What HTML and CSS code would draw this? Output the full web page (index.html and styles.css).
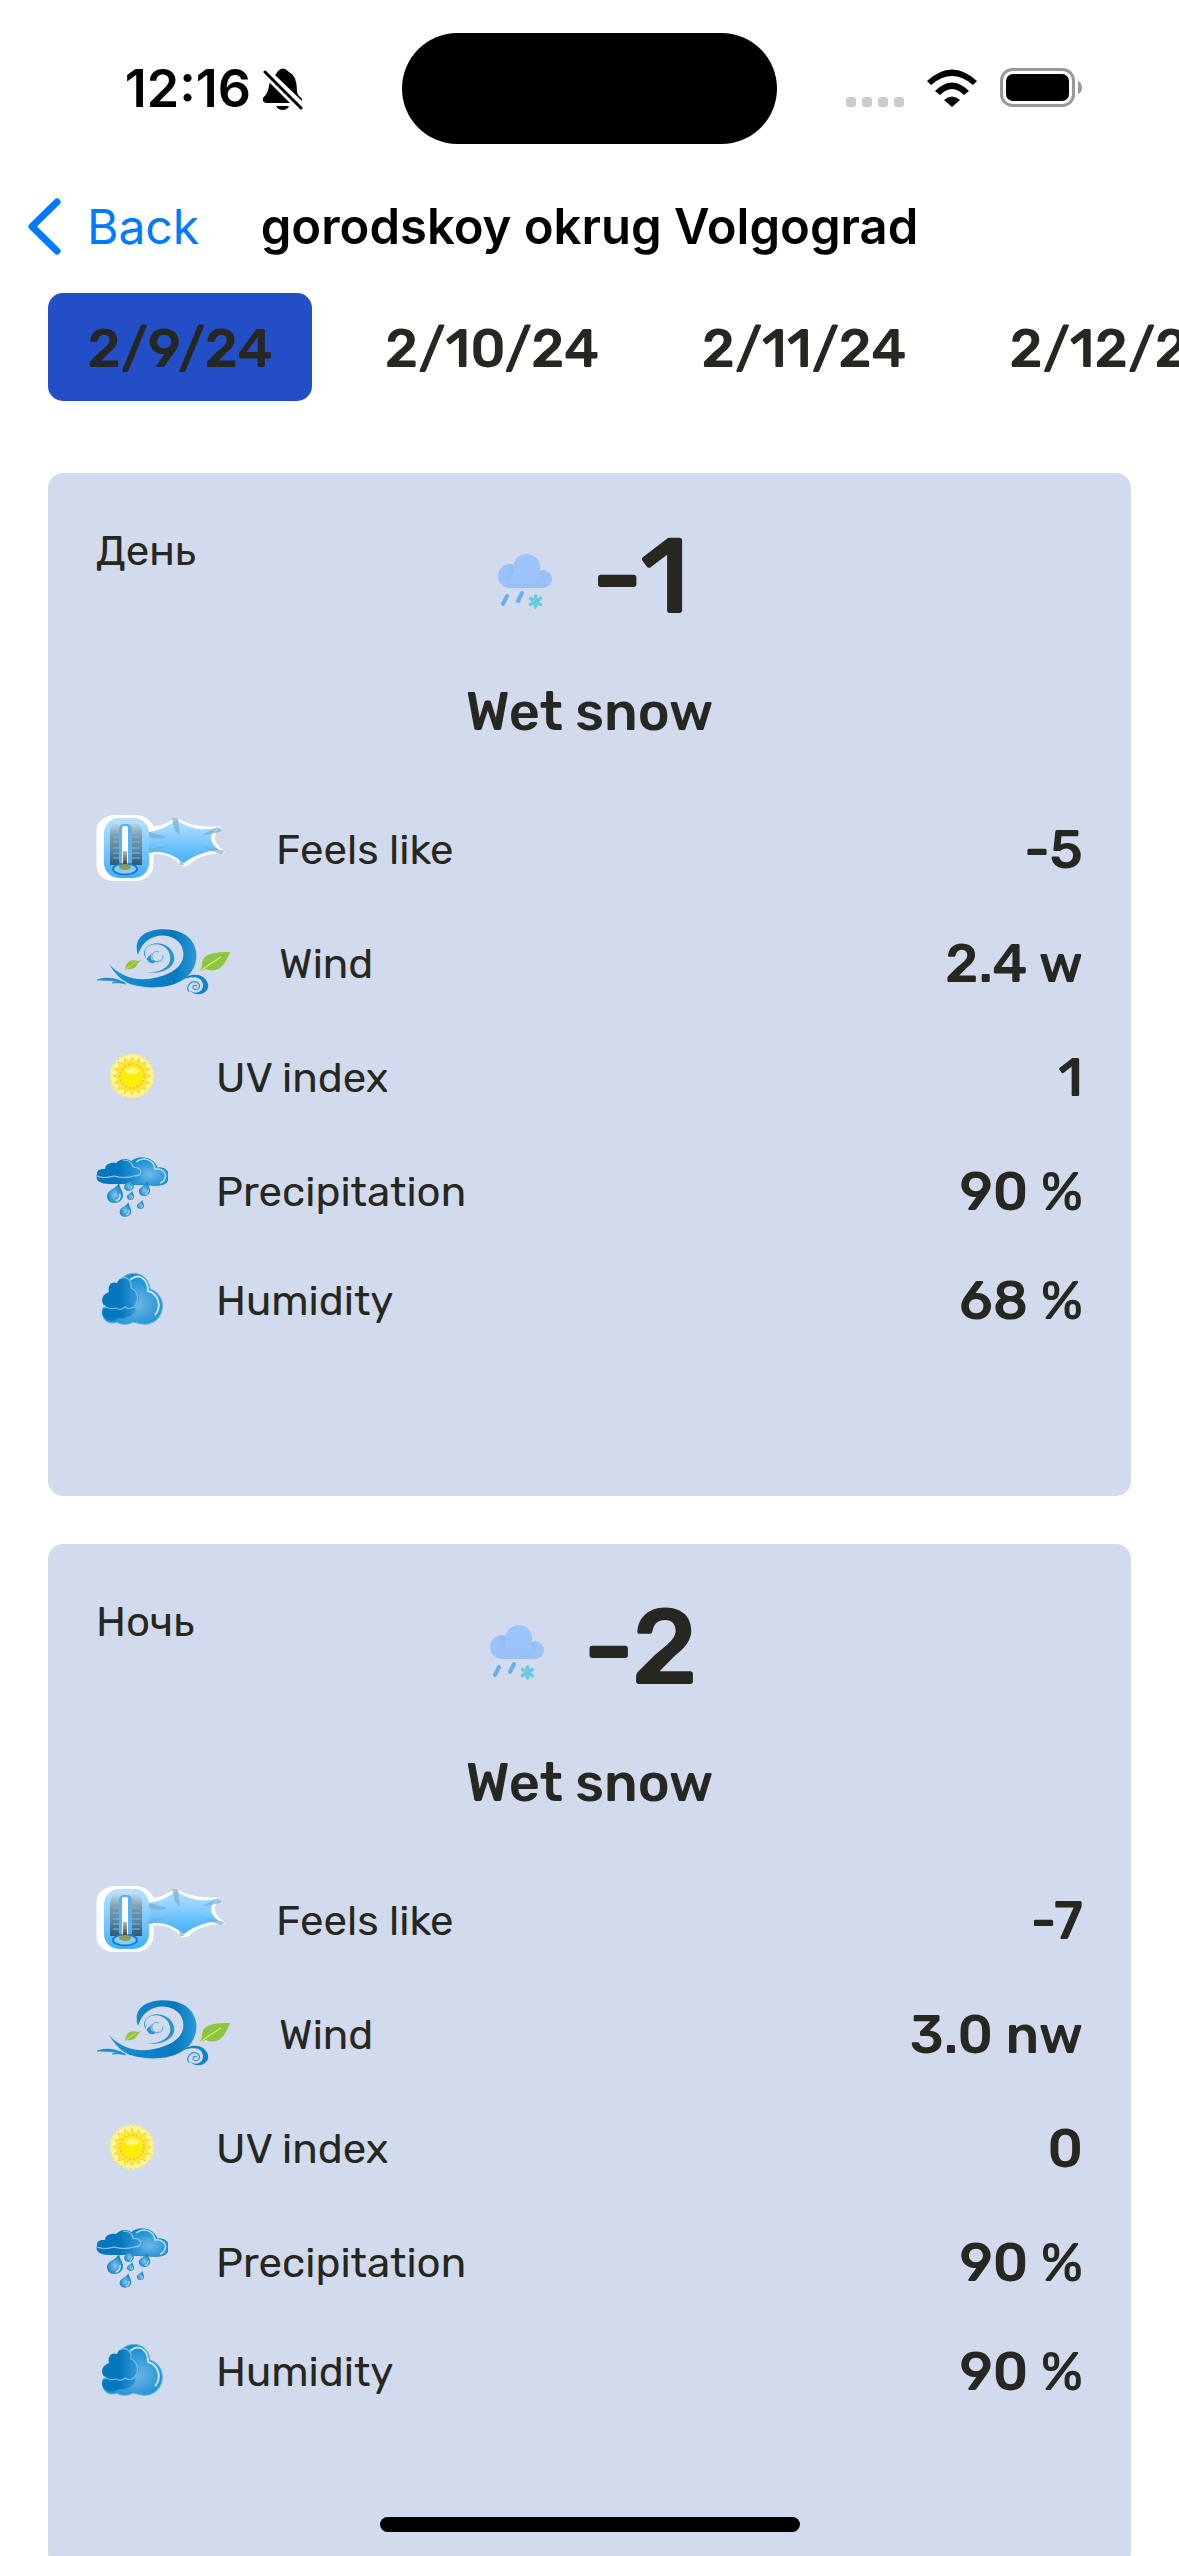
FILE: index.html
```html
<!DOCTYPE html>
<html lang="en">
<head>
<meta charset="utf-8">
<meta name="viewport" content="width=device-width, initial-scale=1">
<title>gorodskoy okrug Volgograd</title>
<link rel="stylesheet" href="styles.css">
</head>
<body>
<svg class="defs" aria-hidden="true">
  <defs>
    <linearGradient id="sky" x1="0" y1="0" x2="0" y2="1"><stop offset="0" stop-color="#b9e2ff"/><stop offset="1" stop-color="#3fb0ff"/></linearGradient>
    <linearGradient id="plate" x1="0" y1="0" x2="0" y2="1"><stop offset="0" stop-color="#c4e4fb"/><stop offset="0.35" stop-color="#7f97a6"/><stop offset="0.65" stop-color="#5d89a6"/><stop offset="1" stop-color="#2f5770"/></linearGradient>
    <linearGradient id="mercury" x1="0" y1="0" x2="0" y2="1"><stop offset="0" stop-color="#b5bcc4"/><stop offset="1" stop-color="#3b3f3a"/></linearGradient>
    <linearGradient id="wave" x1="0" y1="0" x2="1" y2="0"><stop offset="0" stop-color="#1a93d4"/><stop offset="0.75" stop-color="#0878be"/><stop offset="1" stop-color="#2a9ada"/></linearGradient>
    <radialGradient id="cloudLight" cx="0.55" cy="0.6" r="0.6"><stop offset="0" stop-color="#73b8e6"/><stop offset="0.6" stop-color="#349bd8"/><stop offset="1" stop-color="#128bcd"/></radialGradient>
    <linearGradient id="cloudDark" x1="0" y1="0" x2="1" y2="0"><stop offset="0" stop-color="#0577be"/><stop offset="0.5" stop-color="#0577be"/><stop offset="1" stop-color="#3c9fd9"/></linearGradient>
    <radialGradient id="dropFill" cx="0.5" cy="0.6" r="0.6"><stop offset="0" stop-color="#8ac6ec"/><stop offset="0.6" stop-color="#2d95d3"/><stop offset="1" stop-color="#0676bb"/></radialGradient>
    <linearGradient id="puff" x1="0" y1="0" x2="0" y2="1"><stop offset="0" stop-color="#9cc6ff"/><stop offset="1" stop-color="#9bc0f5"/></linearGradient>
    <linearGradient id="puffShade" x1="0" y1="0" x2="1" y2="0"><stop offset="0.3" stop-color="#9bc3fb"/><stop offset="1" stop-color="#8bb3ec"/></linearGradient>
    <linearGradient id="puffShadeLeft" x1="1" y1="0" x2="0" y2="0"><stop offset="0.3" stop-color="#9bc3fb"/><stop offset="1" stop-color="#8bb3ec"/></linearGradient>
  </defs>
  <symbol id="i-sleet" viewBox="-9 -15 72 72">
    <circle cx="12" cy="21" r="12" fill="url(#puffShade)"/>
    <circle cx="45" cy="24" r="9" fill="url(#puffShadeLeft)"/>
    <path d="M12 33C7 31 14 21 16 17A13.500 13.500 0 1 1 41 18C42 24 47 26 50 31L45 33Z" fill="url(#puff)"/>
    <path d="M9 41L5 49M24 38L20 46" stroke="#66b1ec" stroke-width="4" stroke-linecap="round"/>
    <path d="M37.500 41V52M32.500 43.500L42.500 49.500M42.500 43.500L32.500 49.500" stroke="#66cae2" stroke-width="3.500" stroke-linecap="round"/>
  </symbol>
  <symbol id="i-feels" viewBox="0 0 132 66">
    <path d="M24 0H34C48 0 55 5 57 12C66 12 73 7 80 3L84 5C96 12 108 12 124 12C116 20 116 27 129 37C114 38 101 41 92 50L86 51C78 42 70 38 57 39V50C57 60 48 66 36 66H22C8 66 1 60 1 50V15C1 6 10 0 24 0Z" fill="#fff" stroke="#fff" stroke-width="1"/>
    <rect x="8" y="3" width="45" height="60" rx="15" fill="url(#sky)"/>
    <path d="M53 17C66 15 73 10 80 5C94 14 106 16 120 13C113 20 113 28 123 35C110 36 98 40 88 48C76 39 66 35 53 38Z" fill="url(#sky)"/>
    <path d="M76 3H82L84 20L79 16ZM106 20L122 12L126 16Q115 20 106 20ZM105 31L129 36L125 39Q112 35 105 31ZM82 34L88 50H84ZM53 17L71 22Q66 25 53 22ZM53 38L71 32Q64 31 53 34Z" fill="#78a9cb" opacity="0.65"/>
    <path d="M14 50V18Q14 6 26 6H34Q46 6 46 18V50Z" fill="url(#plate)"/>
    <path d="M17 17H44M17 22H44M17 27H44M17 33H44M17 38H44M17 43H44" stroke="#77baf0" stroke-width="1"/>
    <rect x="23" y="9" width="13" height="42" rx="5" fill="#5ab2ee"/>
    <ellipse cx="29" cy="54" rx="12" ry="5.500" fill="#8acbff" stroke="#1b7fc7" stroke-width="2"/>
    <rect x="26" y="11" width="6" height="38" rx="2" fill="#fff"/>
    <rect x="27" y="36" width="4" height="14" fill="url(#mercury)"/>
    <ellipse cx="29" cy="52" rx="6" ry="3" fill="#8e9a55"/>
  </symbol>
  <symbol id="i-wind" viewBox="0 0 135 66">
    <path d="M42 26C35 5 57-2 76 1C97 4 105 22 98 38C89 59 58 62 34 55C24 51 18 43 13 35C24 47 40 53 58 49C83 44 91 31 86 18C79 2 49 1 42 26Z" fill="url(#wave)"/>
    <path d="M58 33Q68 32 66 26Q63 18 55 21Q46 26 52 32C55 36 60 34 61 31C50 33 44 25 51 18C60 10 76 16 78 27C80 38 68 45 50 44C61 44 72 40 74 32C76 20 65 13 55 16C45 20 49 31 55 33Z" fill="#168bce" opacity="0.9"/>
    <path d="M50 30A10 11 0 0 1 66 20Q72 32 60 32Q52 31 56 24" fill="#d2daed"/>
    <path d="M67 26Q67 33 61 33Q55 31 56 26Q58 21 63 23" fill="none" stroke="#59aede"/>
    <path d="M1 51C11 47 22 50 29 54Q17 51 1 51ZM16 54Q23 51 30 55Q22 53 16 54Z" fill="#1f8bcb" stroke="#1f8bcb" stroke-width="0.600"/>
    <path d="M87 50C96 43 109 45 112 55C114 65 99 69 94 61C97 65 106 65 107 57C107 47 97 47 87 50Z" fill="#0f83c8"/>
    <path d="M93 63C89 57 96 50 102 54C107 59 99 63 97 59Q97 55 101 57" fill="none" stroke="#2e98d3" stroke-width="1.200"/>
    <path d="M29 41C30 31 36 30 42 32L45 31Q43 34 42 34C40 39 36 41 31 40Z" fill="#91c63c"/>
    <path d="M30 40L40 33" stroke="#c4e46d"/>
    <path d="M103 43L106 37C105 24 119 23 134 23C130 33 124 46 110 40Z" fill="#8dc63f"/>
    <path d="M103 43Q112 36 125 28" fill="none" stroke="#d2ed80" stroke-width="1.200"/>
  </symbol>
  <symbol id="i-sun" viewBox="0 0 72 66">
    <g transform="translate(36 33)">
      <circle r="21" fill="#fff9a8"/>
      <circle r="21" fill="none" stroke="#fff36b" stroke-width="3" stroke-dasharray="3 2"/>
      <path d="M0-19L3-13L7-18L8-12L14-14L12-8L18-7L13-3L19 0L13 3L18 7L12 8L14 14L8 12L7 18L3 13L0 19L-3 13L-7 18L-8 12L-14 14L-12 8L-18 7L-13 3L-19 0L-13-3L-18-7L-12-8L-14-14L-8-12L-7-18L-3-13Z" fill="#ffea3c" stroke="#ffd42e" stroke-width="1"/>
      <circle r="12" fill="none" stroke="#ffc400" stroke-width="2" stroke-dasharray="2 2"/>
      <circle r="10" fill="#ffee00"/>
      <ellipse cy="-5" rx="7" ry="3.500" fill="#fff67a"/>
    </g>
  </symbol>
  <symbol id="i-drop" viewBox="0 0 18 20">
    <path d="M13 0C14 6 17 8 17 12C17 17 13 20 8 20C3 20 1 16 1 13C1 7 10 6 13 0Z" fill="url(#dropFill)"/>
    <path d="M14 11Q15 16 10 18" fill="none" stroke="#cbe8fa" stroke-width="1.500"/>
  </symbol>
  <symbol id="i-rain" viewBox="0 1 72 66">
    <path d="M34 7C40-1 58 0 61 12C69 11 74 16 72 21C73 29 64 30 53 29L30 28Z" fill="url(#cloudLight)" stroke="#168bce"/>
    <path d="M40 6C48 0 58 4 59 13C66 12 71 17 69 22Q68 26 64 27" fill="none" stroke="#b7dcf4" stroke-width="1.500"/>
    <path d="M1 18C1 13 5 13 9 13C9 8 15 6 20 7C26 1 35 2 38 9C46 9 50 17 44 21C49 25 44 28 37 28H13C3 28-1 24 1 18Z" fill="url(#cloudDark)"/>
    <path d="M1 20Q8 23 18 20Q28 23 38 20C45 20 47 15 42 12L37 11Q36 4 27 4" fill="none" stroke="#8bc8ec" stroke-width="1.200"/>
    <use href="#i-drop" x="10" y="27" width="18" height="20"/>
    <use href="#i-drop" x="27" y="23" width="12" height="12"/>
    <use href="#i-drop" x="42" y="26" width="13" height="14"/>
    <use href="#i-drop" x="30" y="35" width="9" height="9"/>
    <use href="#i-drop" x="40" y="44" width="9" height="9"/>
    <use href="#i-drop" x="23" y="46" width="13" height="15"/>
  </symbol>
  <symbol id="i-humid" viewBox="0 0 72 60">
    <path d="M24 11C28-1 52-2 54 18C69 23 70 42 59 50C50 56 42 52 37 51C30 55 23 53 21 51C11 55 4 46 7 37L24 31Z" fill="url(#cloudLight)" stroke="#5db0df"/>
    <path d="M34 9C43 1 52 8 52 20C63 23 66 36 59 44" fill="none" stroke="#c0e1f6" stroke-width="2"/>
    <path d="M12 37C4 34 4 24 13 21C11 13 17 10 21 12C24 3 36 4 36 16C44 19 45 32 39 36C42 42 30 49 23 47C16 52 3 48 7 38Z" fill="url(#cloudDark)"/>
    <path d="M24 8C31 4 36 10 35 17C43 20 43 31 38 36Q33 39 29 36Q25 40 20 37Q12 39 8 34" fill="none" stroke="#7abfe8" stroke-width="1.200"/>
  </symbol>
</svg>

<div class="screen">
  <header class="status">
    <div class="status-left">
      <span class="time">12:16</span>
      <svg class="bell" viewBox="0 0 40 42" role="img" aria-label="Silent mode">
        <path d="M12 7Q14 6 14 4Q20-3 26 4Q34 8 34 23C34 29 40 29 39 33ZM7 15L27 35H3Q-1 34 0 30Q6 24 6 17Z"/>
        <path d="M13 38H26Q24 42 20 42Q15 42 13 38Z"/>
        <path d="M2 4L38 40" stroke="#000" stroke-width="3" stroke-linecap="round"/>
      </svg>
    </div>
    <div class="island"></div>
    <div class="status-right">
      <svg class="signal" viewBox="0 0 58 10" role="img" aria-label="No signal"><rect width="10" height="10" rx="3"/><rect x="16" width="10" height="10" rx="3"/><rect x="32" width="10" height="10" rx="3"/><rect x="48" width="10" height="10" rx="3"/></svg>
      <svg class="wifi" viewBox="0 0 52 38" role="img" aria-label="Wi-Fi"><path d="M1 12Q26-11 51 12L47 16Q26-2 5 16ZM9 22Q26 5 43 22L38 26Q26 14 14 26ZM18 31Q26 24 34 31L26 38Z"/></svg>
      <svg class="battery" viewBox="0 0 82 40" role="img" aria-label="Battery full"><rect x="1.500" y="1.500" width="72" height="36" rx="11" fill="none" stroke="#999" stroke-width="3"/><rect x="6" y="6" width="63" height="27" rx="7"/><path d="M78 13Q82 15 82 20Q82 24 78 26Z" fill="#999"/></svg>
    </div>
  </header>

  <nav class="navbar">
    <a class="back" href="#"><svg class="chevron" viewBox="0 0 33 57" aria-hidden="true"><path d="M29 4L4 28.500L29 53" fill="none" stroke="#007aff" stroke-width="7" stroke-linecap="round" stroke-linejoin="round"/></svg>Back</a>
    <h1 class="title">gorodskoy okrug Volgograd</h1>
  </nav>

  <div class="dates">
    <button class="date selected" type="button">2/9/24</button>
    <button class="date" type="button">2/10/24</button>
    <button class="date" type="button">2/11/24</button>
    <button class="date" type="button">2/12/24</button>
  </div>

  <main class="cards">
    <section class="card">
      <div class="card-head">
        <h2 class="part">День</h2>
        <div class="now"><svg class="now-icon" aria-hidden="true"><use href="#i-sleet"/></svg><span>-1</span></div>
      </div>
      <p class="summary">Wet snow</p>
      <ul class="facts">
        <li class="fact"><svg class="icon icon-feels" aria-hidden="true"><use href="#i-feels"/></svg><span class="label">Feels like</span><span class="value">-5</span></li>
        <li class="fact"><svg class="icon icon-wind" aria-hidden="true"><use href="#i-wind"/></svg><span class="label">Wind</span><span class="value">2.4 w</span></li>
        <li class="fact"><svg class="icon" aria-hidden="true"><use href="#i-sun"/></svg><span class="label">UV index</span><span class="value">1</span></li>
        <li class="fact"><svg class="icon" aria-hidden="true"><use href="#i-rain"/></svg><span class="label">Precipitation</span><span class="value">90 %</span></li>
        <li class="fact"><svg class="icon icon-humid" aria-hidden="true"><use href="#i-humid"/></svg><span class="label">Humidity</span><span class="value">68 %</span></li>
      </ul>
    </section>

    <section class="card">
      <div class="card-head">
        <h2 class="part">Ночь</h2>
        <div class="now"><svg class="now-icon" aria-hidden="true"><use href="#i-sleet"/></svg><span>-2</span></div>
      </div>
      <p class="summary">Wet snow</p>
      <ul class="facts">
        <li class="fact"><svg class="icon icon-feels" aria-hidden="true"><use href="#i-feels"/></svg><span class="label">Feels like</span><span class="value">-7</span></li>
        <li class="fact"><svg class="icon icon-wind" aria-hidden="true"><use href="#i-wind"/></svg><span class="label">Wind</span><span class="value">3.0 nw</span></li>
        <li class="fact"><svg class="icon" aria-hidden="true"><use href="#i-sun"/></svg><span class="label">UV index</span><span class="value">0</span></li>
        <li class="fact"><svg class="icon" aria-hidden="true"><use href="#i-rain"/></svg><span class="label">Precipitation</span><span class="value">90 %</span></li>
        <li class="fact"><svg class="icon icon-humid" aria-hidden="true"><use href="#i-humid"/></svg><span class="label">Humidity</span><span class="value">90 %</span></li>
      </ul>
    </section>
  </main>
  <div class="home-indicator"></div>
</div>
</body>
</html>
```
FILE: styles.css
```css
* {
  box-sizing: border-box;
}

body {
  margin: 0;
  background: #fff;
  color: #262721;
  font-family: Rubik, Roboto, sans-serif;
}

h1,
h2,
p,
ul {
  margin: 0;
  padding: 0;
}

.defs {
  position: absolute;
  width: 0;
  height: 0;
}

.screen {
  display: flex;
  flex-direction: column;
  height: 100vh;
  overflow: hidden;
}

/* Status bar */
.status {
  display: grid;
  grid-template-columns: 1fr auto 1fr;
  align-items: center;
  padding: 33px 0 36px;
  color: #000;
}

.status-left,
.status-right {
  display: flex;
  align-items: center;
}

.status-left {
  justify-content: flex-end;
  gap: 12px;
  padding-right: 99px;
}

.status-right {
  gap: 22px;
  padding: 0 0 2px 69px;
}

.time {
  font: 600 52px/60px Inter, sans-serif;
}

.island {
  width: 375px;
  height: 111px;
  border-radius: 56px;
  background: #000;
}

.bell {
  width: 40px;
  height: 42px;
}

.signal {
  align-self: flex-end;
  width: 58px;
  height: 10px;
  margin-bottom: 1px;
  fill: #ccc;
}

.wifi {
  width: 52px;
  height: 38px;
}

.battery {
  width: 82px;
  height: 40px;
}

/* Navigation bar */
.navbar {
  display: grid;
  grid-template-columns: 1fr auto 1fr;
  align-items: center;
  height: 95px;
  padding: 0 28px 2px;
  font: 400 48px/60px Inter, sans-serif;
}

.back {
  display: flex;
  align-items: center;
  gap: 26px;
  color: #007aff;
  text-decoration: none;
}

.chevron {
  width: 33px;
  height: 57px;
}

.title {
  color: #000;
  font-size: 49px;
  font-weight: 600;
}

/* Date tabs */
.dates {
  display: flex;
  gap: 48px;
  padding: 18px 48px 0;
  overflow: hidden;
}

.date {
  flex: 0 0 264px;
  height: 108px;
  padding: 3px 0 0;
  border: 0;
  border-radius: 15px;
  background: none;
  color: inherit;
  font: 500 54px/64px Rubik, Roboto, sans-serif;
}

.date.selected {
  background: #224fc7;
}

/* Forecast cards */
.cards {
  display: flex;
  flex: 1;
  flex-direction: column;
  gap: 48px;
  min-height: 0;
  padding: 72px 48px 48px;
  overflow-y: auto;
  scrollbar-width: none;
}

.card {
  flex: none;
  padding: 48px 48px 165px;
  border-radius: 15px;
  background: #d2daed;
}

.card-head {
  display: grid;
  grid-template-columns: 1fr auto 1fr;
}

.part {
  font-size: 42px;
  font-weight: 400;
  line-height: 60px;
}

.now {
  display: flex;
  align-items: center;
  gap: 30px;
  font-size: 108px;
  font-weight: 500;
  line-height: 110px;
}

.now-icon {
  width: 72px;
  height: 72px;
}

.summary {
  margin: 49px 0 71px;
  font-size: 54px;
  font-weight: 500;
  line-height: 64px;
  text-align: center;
}

.facts {
  display: flex;
  flex-direction: column;
  gap: 48px;
  list-style: none;
}

.fact {
  display: flex;
  align-items: center;
  gap: 48px;
}

.icon {
  flex: none;
  width: 72px;
  height: 66px;
}

.icon-feels {
  width: 132px;
}

.icon-wind {
  width: 135px;
}

.icon-humid {
  height: 60px;
}

.label {
  flex: 1;
  font-size: 42px;
  line-height: 50px;
}

.value {
  font-size: 54px;
  font-weight: 500;
  line-height: 60px;
}

.fact:not(:last-child) .label,
.fact:not(:last-child) .value {
  padding-top: 4px;
}

.home-indicator {
  position: fixed;
  bottom: 24px;
  left: 50%;
  width: 420px;
  height: 15px;
  margin-left: -210px;
  border-radius: 8px;
  background: #000;
}
```
